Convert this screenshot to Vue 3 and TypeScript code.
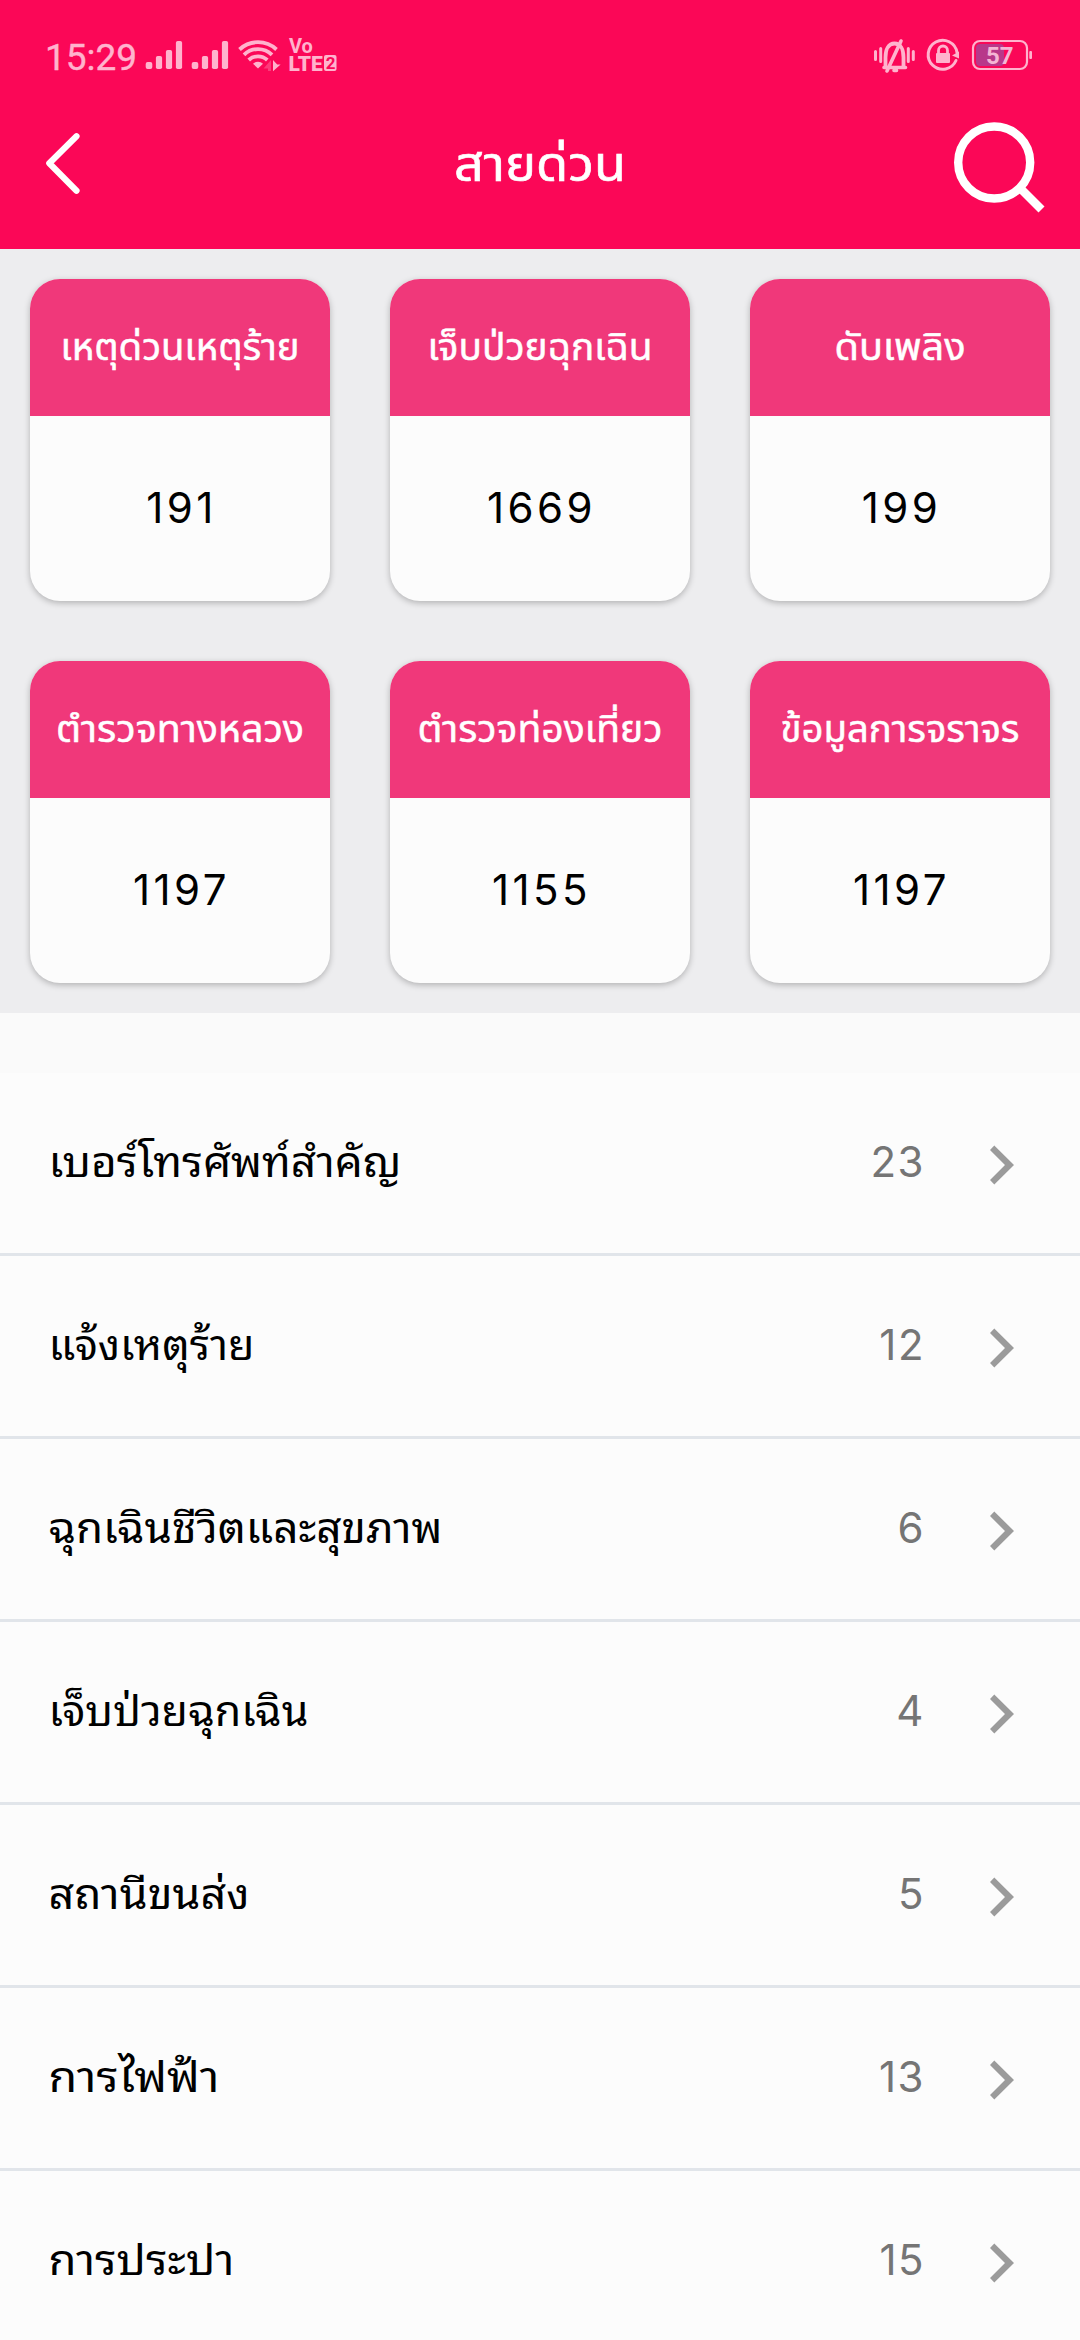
<script setup lang="ts">
interface Hotline { name: string; phone: string; width: number }
interface Category { name: string; count: number; width: number }

const hotlines: Hotline[] = [
  { name: 'เหตุด่วนเหตุร้าย', phone: '191', width: 239 },
  { name: 'เจ็บป่วยฉุกเฉิน', phone: '1669', width: 225 },
  { name: 'ดับเพลิง', phone: '199', width: 131 },
  { name: 'ตำรวจทางหลวง', phone: '1197', width: 248 },
  { name: 'ตำรวจท่องเที่ยว', phone: '1155', width: 245 },
  { name: 'ข้อมูลการจราจร', phone: '1197', width: 239 },
]

const categories: Category[] = [
  { name: 'เบอร์โทรศัพท์สำคัญ', count: 23, width: 353 },
  { name: 'แจ้งเหตุร้าย', count: 12, width: 206 },
  { name: 'ฉุกเฉินชีวิตและสุขภาพ', count: 6, width: 394 },
  { name: 'เจ็บป่วยฉุกเฉิน', count: 4, width: 260 },
  { name: 'สถานีขนส่ง', count: 5, width: 201 },
  { name: 'การไฟฟ้า', count: 13, width: 171 },
  { name: 'การประปา', count: 15, width: 186 },
]
</script>

<template>
  <div class="screen">
    <header class="header">
      <div class="status">
        <svg width="310" height="50" viewBox="40 30 310 50">
          <g fill="#ffb3cd">
            <text x="45" y="69.5" class="clock">15:29</text>
            <g v-for="x in [145.7, 191.7]" :key="x">
              <rect :x="x" y="62" width="6.6" height="7" rx="2" />
              <rect :x="x + 10.2" y="56" width="6.2" height="13" rx="1.8" />
              <rect :x="x + 20.2" y="50" width="6.2" height="19" rx="1.8" />
              <rect :x="x + 30.2" y="41" width="6.2" height="28" rx="1.8" />
            </g>
            <path d="M258 68.5l-5-4.8a7.2 7.2 0 0 1 10 0z" />
            <path d="M273 60v11.3l7.6-6.8h-3.4z" />
            <path d="M263.5 68.5l7.5-8.5v11h-3v-2.5z" opacity=".3" />
            <text x="289" y="52.5" class="vo">Vo</text>
            <text x="288.5" y="71" class="lte">LTE</text>
            <rect x="324" y="55" width="12.5" height="16" rx="2" />
          </g>
          <g fill="none" stroke="#ffb3cd" stroke-width="3.8">
            <path d="M239.5 49.5a27 27 0 0 1 37 0" />
            <path d="M244 54.8a20 20 0 0 1 28 0" />
            <path d="M248.7 60a13.5 13.5 0 0 1 18.6 0" />
          </g>
          <text x="325.8" y="69" class="sim">2</text>
        </svg>
        <svg width="170" height="50" viewBox="870 30 170 50">
          <g fill="none" stroke="#ffb3cd" stroke-linecap="round" stroke-width="3">
            <path d="M875.5 51.5v8M880.7 48.5v13M908.3 48.5v13M913.3 51.5v8" />
            <path d="M885.5 67v-9.500c0-8 3-14 9-14s9 6 9 14v9.500" stroke-width="3.8" />
            <path d="M884 67.5h21.5M901 41L887 71M894 70.5h2.5" stroke-width="3.6" />
            <path d="M956 60.5a14.500 14.500 0 1 1 1-8" />
            <path d="M938.5 54v-3.500a4.500 4.500 0 0 1 9 0v3.500" stroke-width="2.8" />
          </g>
          <rect x="936" y="53" width="14" height="10" rx="1" fill="#ffb3cd" />
          <path d="M952 55.5l7-4v7z" fill="#ffb3cd" />
          <rect x="976" y="44" width="28" height="22" rx="4" fill="#b8388a" />
          <rect x="973" y="41" width="54" height="28" rx="7" fill="none" stroke="#ffb3cd" stroke-width="2.2" />
          <rect x="1029.3" y="51" width="2.7" height="8" rx="1" fill="#ffb3cd" />
          <text x="986" y="64" class="battery">57</text>
        </svg>
      </div>
      <nav class="nav">
        <svg class="back" width="50" height="70" viewBox="35 128 50 70" fill="none" stroke="#fff" stroke-width="6.2" stroke-linecap="round" stroke-linejoin="round">
          <path d="M76.5 136.200L49.300 163.300L76.500 190.800" />
        </svg>
        <svg class="title" width="200" height="100" viewBox="440 115 200 100">
          <text x="540" y="181" text-anchor="middle" textLength="172" lengthAdjust="spacingAndGlyphs">สายด่วน</text>
        </svg>
        <svg width="100" height="100" viewBox="950 115 100 100" fill="none" stroke="#fff" stroke-width="8.4">
          <circle cx="994.2" cy="162.5" r="36" />
          <path d="M1019 187L1041.5 209.5" />
        </svg>
      </nav>
    </header>

    <section class="cards">
      <article v-for="h in hotlines" :key="h.name" class="card">
        <svg class="label" width="300" height="137" viewBox="0 0 300 137">
          <text x="150" y="81" text-anchor="middle" :textLength="h.width" lengthAdjust="spacingAndGlyphs">{{ h.name }}</text>
        </svg>
        <p>{{ h.phone }}</p>
      </article>
    </section>

    <ul class="list">
      <li v-for="c in categories" :key="c.name">
        <svg class="name" width="460" height="180" viewBox="0 0 460 180">
          <text x="-0.5" y="104" :textLength="c.width" lengthAdjust="spacingAndGlyphs">{{ c.name }}</text>
        </svg>
        <span class="count">{{ c.count }}</span>
        <svg class="arrow" width="24" height="40" viewBox="990 1144.5 24 40" fill="#9b9b9b">
          <path d="M994.3 1145L1014 1164.5L994.3 1184L990 1179.5L1005 1164.5L990 1149.5z" />
        </svg>
      </li>
    </ul>
  </div>
</template>

<style>
body { margin: 0; background: #fcfcfc; overflow: hidden; }
</style>

<style scoped>
.screen { width: 1080px; height: 2340px; overflow: hidden; background: #fafafa; font-family: Inter, "Noto Sans Thai", "Noto Sans", sans-serif; }
.header { height: 249px; background: #fb0757; }
.status { display: flex; justify-content: space-between; padding: 30px 40px 0; }
svg { display: block; flex: none; }
.clock { font: 400 37px Roboto, sans-serif; stroke: #ffb3cd; stroke-width: .4px; }
.vo { font: 700 20px Roboto, sans-serif; }
.lte { font: 900 21px Roboto, sans-serif; }
.sim { font: 700 17px Roboto, sans-serif; fill: #fb0757; }
.battery { font: 700 24px Roboto, sans-serif; fill: #f5b5d5; }
.nav { display: grid; grid-template-columns: 405px 1fr 100px; padding: 35px 30px 0 35px; }
.back { margin-top: 13px; }
.title { font-size: 48px; fill: #fff; stroke: #fff; stroke-width: .6px; }
.cards { box-sizing: border-box; display: grid; grid-template-columns: repeat(3, 300px); grid-auto-rows: 322px; gap: 60px; padding: 30px; height: 764px; background: #ededef; }
.card { border-radius: 30px; overflow: hidden; background: #fcfcfc; box-shadow: 0 2px 6px rgba(0, 0, 0, .25); }
.label { background: #f0387a; fill: #fff; stroke: #fff; stroke-width: .5px; font-size: 37px; }
p { box-sizing: border-box; margin: 0; height: 185px; padding: 0 0 3px 3px; display: flex; align-items: center; justify-content: center; font-size: 42px; font-weight: 400; letter-spacing: 3.4px; color: #000; }
.list { list-style: none; margin: 60px 0 0; padding: 0; background: #fcfcfc; }
li { height: 180px; border-bottom: 3px solid #e1e5ea; display: flex; align-items: center; padding: 0 66px 0 49px; }
.name { margin-right: auto; font-family: "Noto Sans Thai Looped", "Noto Looped Thai", Loma, Waree, Garuda, "Noto Sans Thai", "Noto Sans", sans-serif; font-size: 42px; fill: #000; }
.count { font-size: 42px; font-weight: 400; letter-spacing: 1.5px; color: #757575; margin-right: 65px; padding-bottom: 4px; }
.arrow { margin-top: 3px; }
</style>
